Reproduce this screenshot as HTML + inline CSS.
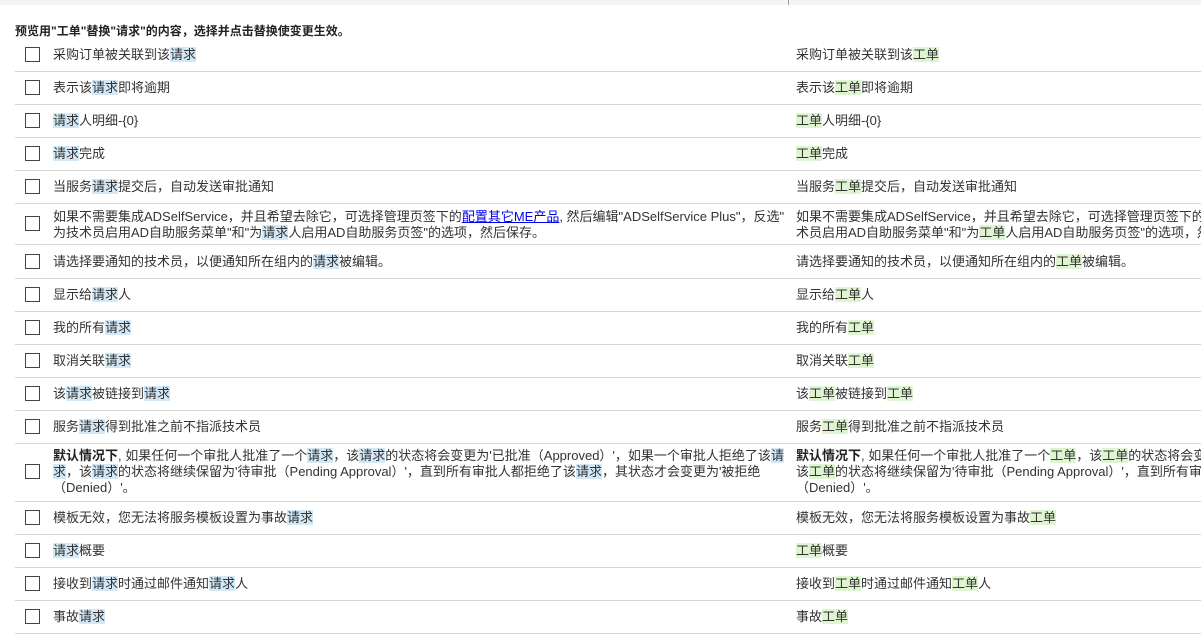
<!DOCTYPE html>
<html><head><meta charset="utf-8"><style>
body{margin:0;width:1201px;height:634px;overflow:hidden;background:#fff;font-family:"Liberation Sans","Noto Sans CJK SC",sans-serif;font-size:13px;color:#333;position:relative}
.top{position:absolute;left:0;top:0;width:1201px;height:5px;background:#f4f4f4}
.vl{position:absolute;left:788px;top:0;width:1px;height:5px;background:#999}
.title{position:absolute;left:15px;top:22px;font-weight:bold;font-size:12px;color:#222}
.row{position:absolute;left:15px;width:1186px;border-bottom:1px solid #d6d6d6;overflow:hidden}
.cb{position:absolute;left:10px;width:13px;height:13px;border:1px solid #444;background:#fff}
.l,.r{position:absolute;white-space:nowrap;line-height:16px}
.l{left:38px}.r{left:781px}
b.b{background:#d3e8f7;font-weight:normal}
b.g{background:#dff5d2;font-weight:normal}
a{color:#0000ee;text-decoration:underline}
strong{color:#222}
</style></head><body>
<div class="top"></div><div class="vl"></div>
<div class="title">预览用"工单"替换"请求"的内容，选择并点击替换使变更生效。</div>

<div class="row" style="top:38px;height:33px"><div class="cb" style="top:9px"></div><div class="l" style="top:9px">采购订单被关联到该<b class="b">请求</b></div><div class="r" style="top:9px">采购订单被关联到该<b class="g">工单</b></div></div>
<div class="row" style="top:71px;height:33px"><div class="cb" style="top:9px"></div><div class="l" style="top:9px">表示该<b class="b">请求</b>即将逾期</div><div class="r" style="top:9px">表示该<b class="g">工单</b>即将逾期</div></div>
<div class="row" style="top:104px;height:33px"><div class="cb" style="top:9px"></div><div class="l" style="top:9px"><b class="b">请求</b>人明细-{0}</div><div class="r" style="top:9px"><b class="g">工单</b>人明细-{0}</div></div>
<div class="row" style="top:137px;height:33px"><div class="cb" style="top:9px"></div><div class="l" style="top:9px"><b class="b">请求</b>完成</div><div class="r" style="top:9px"><b class="g">工单</b>完成</div></div>
<div class="row" style="top:170px;height:33px"><div class="cb" style="top:9px"></div><div class="l" style="top:9px">当服务<b class="b">请求</b>提交后，自动发送审批通知</div><div class="r" style="top:9px">当服务<b class="g">工单</b>提交后，自动发送审批通知</div></div>
<div class="row" style="top:203px;height:41px"><div class="cb" style="top:13px"></div><div class="l" style="top:6px">如果不需要集成ADSelfService，并且希望去除它，可选择管理页签下的<a>配置其它ME产品</a>, 然后编辑"ADSelfService Plus"，反选"<br>为技术员启用AD自助服务菜单"和"为<b class="b">请求</b>人启用AD自助服务页签"的选项，然后保存。</div><div class="r" style="top:6px">如果不需要集成ADSelfService，并且希望去除它，可选择管理页签下的<br>术员启用AD自助服务菜单"和"为<b class="g">工单</b>人启用AD自助服务页签"的选项，然后保存。</div></div>
<div class="row" style="top:245px;height:33px"><div class="cb" style="top:9px"></div><div class="l" style="top:9px">请选择要通知的技术员，以便通知所在组内的<b class="b">请求</b>被编辑。</div><div class="r" style="top:9px">请选择要通知的技术员，以便通知所在组内的<b class="g">工单</b>被编辑。</div></div>
<div class="row" style="top:278px;height:33px"><div class="cb" style="top:9px"></div><div class="l" style="top:9px">显示给<b class="b">请求</b>人</div><div class="r" style="top:9px">显示给<b class="g">工单</b>人</div></div>
<div class="row" style="top:311px;height:33px"><div class="cb" style="top:9px"></div><div class="l" style="top:9px">我的所有<b class="b">请求</b></div><div class="r" style="top:9px">我的所有<b class="g">工单</b></div></div>
<div class="row" style="top:344px;height:33px"><div class="cb" style="top:9px"></div><div class="l" style="top:9px">取消关联<b class="b">请求</b></div><div class="r" style="top:9px">取消关联<b class="g">工单</b></div></div>
<div class="row" style="top:377px;height:33px"><div class="cb" style="top:9px"></div><div class="l" style="top:9px">该<b class="b">请求</b>被链接到<b class="b">请求</b></div><div class="r" style="top:9px">该<b class="g">工单</b>被链接到<b class="g">工单</b></div></div>
<div class="row" style="top:410px;height:33px"><div class="cb" style="top:9px"></div><div class="l" style="top:9px">服务<b class="b">请求</b>得到批准之前不指派技术员</div><div class="r" style="top:9px">服务<b class="g">工单</b>得到批准之前不指派技术员</div></div>
<div class="row" style="top:443px;height:58px"><div class="cb" style="top:21px"></div><div class="l" style="top:5px"><strong>默认情况下</strong>, 如果任何一个审批人批准了一个<b class="b">请求</b>，该<b class="b">请求</b>的状态将会变更为'已批准（Approved）'，如果一个审批人拒绝了该<b class="b">请</b><br><b class="b">求</b>，该<b class="b">请求</b>的状态将继续保留为'待审批（Pending Approval）'，直到所有审批人都拒绝了该<b class="b">请求</b>，其状态才会变更为'被拒绝<br>（Denied）'。</div><div class="r" style="top:5px"><strong>默认情况下</strong>, 如果任何一个审批人批准了一个<b class="g">工单</b>，该<b class="g">工单</b>的状态将会变更为'已批准<br>该<b class="g">工单</b>的状态将继续保留为'待审批（Pending Approval）'，直到所有审批人<br>（Denied）'。</div></div>
<div class="row" style="top:501px;height:33px"><div class="cb" style="top:9px"></div><div class="l" style="top:9px">模板无效，您无法将服务模板设置为事故<b class="b">请求</b></div><div class="r" style="top:9px">模板无效，您无法将服务模板设置为事故<b class="g">工单</b></div></div>
<div class="row" style="top:534px;height:33px"><div class="cb" style="top:9px"></div><div class="l" style="top:9px"><b class="b">请求</b>概要</div><div class="r" style="top:9px"><b class="g">工单</b>概要</div></div>
<div class="row" style="top:567px;height:33px"><div class="cb" style="top:9px"></div><div class="l" style="top:9px">接收到<b class="b">请求</b>时通过邮件通知<b class="b">请求</b>人</div><div class="r" style="top:9px">接收到<b class="g">工单</b>时通过邮件通知<b class="g">工单</b>人</div></div>
<div class="row" style="top:600px;height:33px"><div class="cb" style="top:9px"></div><div class="l" style="top:9px">事故<b class="b">请求</b></div><div class="r" style="top:9px">事故<b class="g">工单</b></div></div>
</body></html>
